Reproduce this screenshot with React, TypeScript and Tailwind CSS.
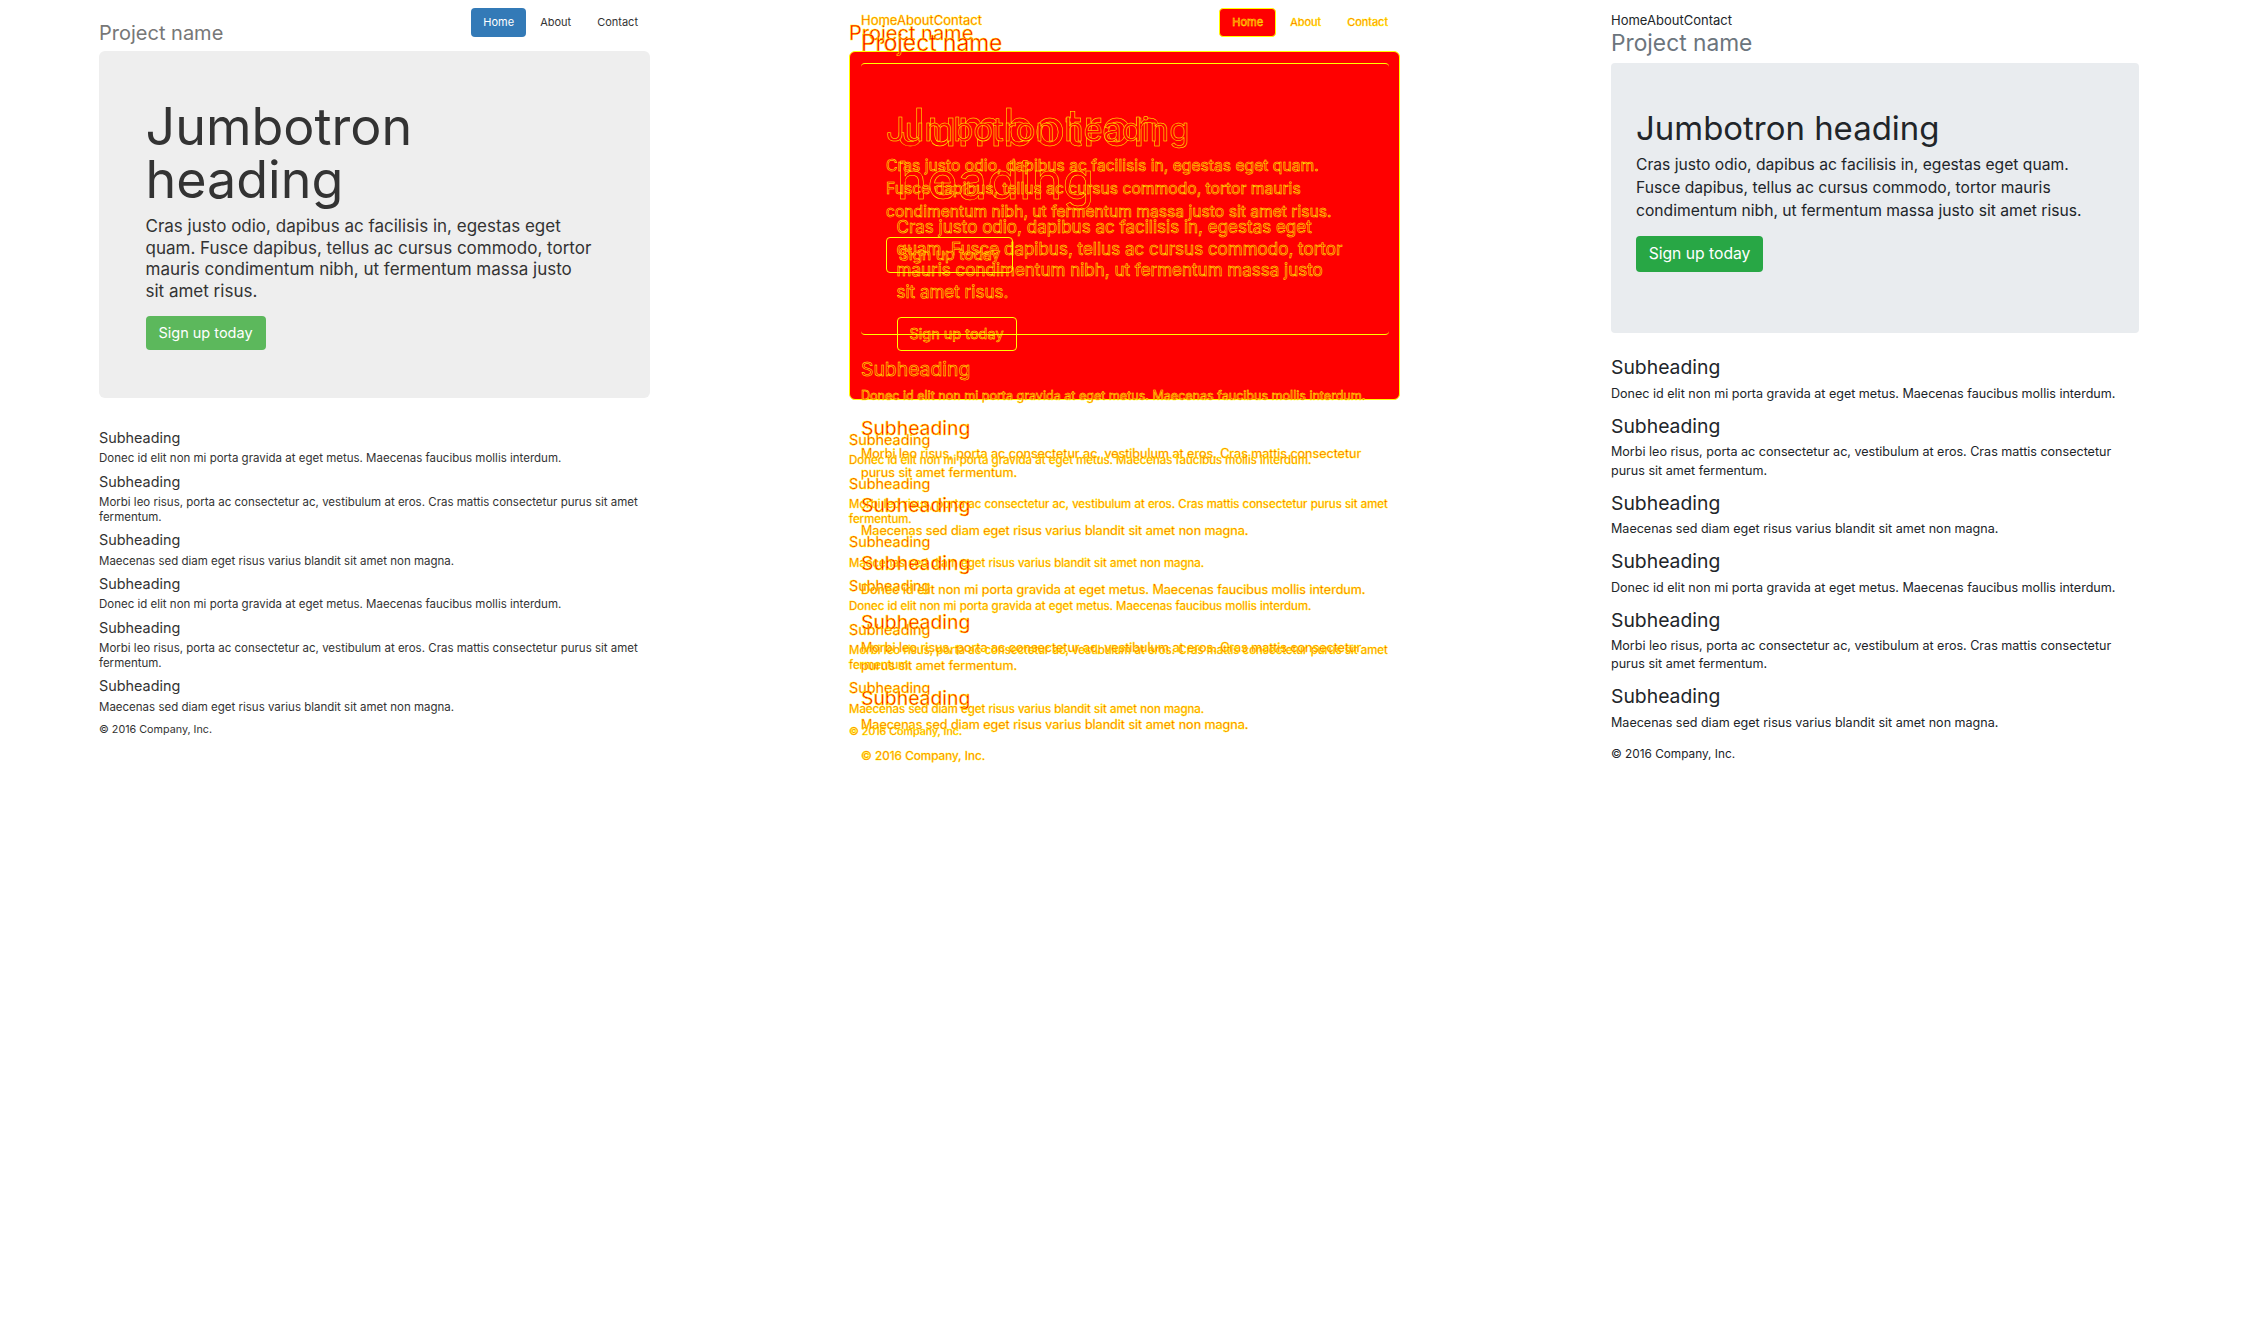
import React from 'react';

// Visual regression view: Bootstrap 3 page | diff overlay | Bootstrap 4 page

const DONEC = 'Donec id elit non mi porta gravida at eget metus. Maecenas faucibus mollis interdum.';
const MAEC = 'Maecenas sed diam eget risus varius blandit sit amet non magna.';

const leftLead = [
  'Cras justo odio, dapibus ac facilisis in, egestas eget',
  'quam. Fusce dapibus, tellus ac cursus commodo, tortor',
  'mauris condimentum nibh, ut fermentum massa justo',
  'sit amet risus.',
];
const rightLead = [
  'Cras justo odio, dapibus ac facilisis in, egestas eget quam.',
  'Fusce dapibus, tellus ac cursus commodo, tortor mauris',
  'condimentum nibh, ut fermentum massa justo sit amet risus.',
];

const leftMorbi = ['Morbi leo risus, porta ac consectetur ac, vestibulum at eros. Cras mattis consectetur purus sit amet', 'fermentum.'];
const rightMorbi = ['Morbi leo risus, porta ac consectetur ac, vestibulum at eros. Cras mattis consectetur', 'purus sit amet fermentum.'];

const leftItems = [[DONEC], leftMorbi, [MAEC], [DONEC], leftMorbi, [MAEC]];
const rightItems = [[DONEC], rightMorbi, [MAEC], [DONEC], rightMorbi, [MAEC]];

// diff text: red fill, yellow outline
const DT = 'text-[#ff0000] [-webkit-text-stroke:0.5px_#ffff00]';

const Bootstrap3Page: React.FC<{ diff?: boolean }> = ({ diff }) => {
    const body = diff ? DT : 'text-[#333]';
    return (
        <div className="ml-[99px] w-[551px] [font-family:Inter,sans-serif]">
            {/* Header */}
            <div className="flex justify-between items-start h-[50.7px]">
                <h3 className={`mt-[20.7px] text-[20px] leading-[24px] ${diff ? DT : 'text-[#777]'}`}>Project name</h3>
                <ul className="flex gap-[2px] mt-[7.7px]">
                    <li
                        className={`h-[29.6px] px-[12px] flex items-center rounded-[4px] text-[11px] ${
                            diff ? 'bg-[#ff0000] border border-[#ffff00] ' + DT : 'bg-[#337ab7] text-white'
                        }`}
                    >
                        Home
                    </li>
                    <li className={`h-[29.6px] px-[12px] flex items-center text-[11px] ${body}`}>About</li>
                    <li className={`h-[29.6px] px-[12px] flex items-center text-[11px] ${body}`}>Contact</li>
                </ul>
            </div>

            {/* Jumbotron */}
            <div
                className={`rounded-[6px] px-[46.5px] pt-[49px] pb-[48px] ${
                    diff ? 'bg-[#ff0000] border border-[#ffff00]' : 'bg-[#eee]'
                }`}
            >
                <h1 className={`text-[52px] leading-[53px] font-normal ${body}`}>Jumbotron heading</h1>
                <p className={`mt-[10.4px] text-[17px] leading-[21.7px] ${body}`}>
                    {leftLead.map(l => (
                        <span key={l} className="block whitespace-nowrap">{l}</span>
                    ))}
                </p>
                <button
                    className={`mt-[13px] h-[34px] w-[120px] rounded-[4px] text-[14.5px] ${
                        diff ? 'bg-[#ff0000] border border-[#ffff00] ' + DT : 'bg-[#5cb85c] text-white'
                    }`}
                >
                    Sign up today
                </button>
            </div>

            {/* Marketing */}
            <div className="mt-[30px]">
                {leftItems.map((lines, i) => (
                    <div key={i} className={i > 0 ? 'mt-[6.35px]' : ''}>
                        <h4 className={`text-[14.4px] leading-[20px] ${body}`}>Subheading</h4>
                        <p className={`mt-[3.45px] text-[11.5px] leading-[14.2px] ${body}`}>
                            {lines.map(l => (
                                <span key={l} className="block whitespace-nowrap">{l}</span>
                            ))}
                        </p>
                    </div>
                ))}
            </div>

            <footer className={`mt-[9.5px] text-[10.75px] leading-[14px] ${body}`}>© 2016 Company, Inc.</footer>
        </div>
    );
};

const Bootstrap4Page: React.FC<{ diff?: boolean }> = ({ diff }) => {
    const body = diff ? DT : 'text-[#212529]';
    return (
        <div className="ml-[111px] w-[527.6px] [font-family:Inter,sans-serif]">
            <nav className={`pt-[11.25px] text-[13px] leading-[18px] ${body}`}>
                <span>Home</span>
                <span>About</span>
                <span>Contact</span>
            </nav>
            <h3 className={`mt-0 text-[22.75px] leading-[27px] ${diff ? DT : 'text-[#6c757d]'}`}>Project name</h3>

            <div
                className={`mt-[7.1px] rounded-[4px] px-[25px] pt-[44.7px] pb-[61px] ${
                    diff ? 'border-y-[1.5px] border-[#ffff00]' : 'bg-[#e9ecef]'
                }`}
            >
                <h1 className={`text-[32.95px] leading-[40px] font-normal ${body}`}>Jumbotron heading</h1>
                <p className={`mt-[4.8px] text-[15.67px] leading-[23px] ${body}`}>
                    {rightLead.map(l => (
                        <span key={l} className="block whitespace-nowrap">{l}</span>
                    ))}
                </p>
                <button
                    className={`mt-[13.9px] h-[36.6px] w-[127px] rounded-[4px] text-[15.68px] ${
                        diff ? 'border border-[#ffff00] ' + DT : 'bg-[#28a745] text-white'
                    }`}
                >
                    Sign up today
                </button>
            </div>

            <div className="mt-[23.15px]">
                {rightItems.map((lines, i) => (
                    <div key={i} className={i > 0 ? 'mt-[11.85px]' : ''}>
                        <h4 className={`text-[19.35px] leading-[23px] ${body}`}>Subheading</h4>
                        <p className={`mt-[5.35px] text-[12.55px] leading-[18.3px] ${body}`}>
                            {lines.map(l => (
                                <span key={l} className="block whitespace-nowrap">{l}</span>
                            ))}
                        </p>
                    </div>
                ))}
            </div>

            <footer className={`mt-[12.4px] text-[11.8px] leading-[18px] ${body}`}>© 2016 Company, Inc.</footer>
        </div>
    );
};

export default function App() {
    return (
        <div className="flex w-[2250px] min-h-[1334px] bg-white">
            <div className="w-[750px] shrink-0">
                <Bootstrap3Page />
            </div>
            {/* Diff: both renders overlaid */}
            <div className="relative w-[750px] shrink-0">
                <Bootstrap3Page diff />
                <div className="absolute inset-0">
                    <Bootstrap4Page diff />
                </div>
            </div>
            <div className="w-[750px] shrink-0">
                <Bootstrap4Page />
            </div>
        </div>
    );
}
